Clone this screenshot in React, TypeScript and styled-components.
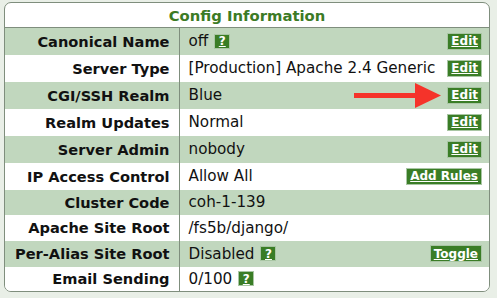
import React from "react";
import styled, { createGlobalStyle } from "styled-components";

const Global = createGlobalStyle`
  html, body { margin: 0; padding: 0; background: #e9efe7; }
  body { font-family: "DejaVu Sans", Verdana, sans-serif; }
`;

const Page = styled.div`
  position: relative;
  padding: 2px 7px 0 4px;
  width: 497px;
  height: 298px;
  box-sizing: border-box;
`;

const Panel = styled.div`
  border: 1px solid #7f8e7d;
  border-radius: 7px;
  overflow: hidden;
  background: #ffffff;
`;

const Table = styled.table`
  width: 100%;
  border-collapse: collapse;
  table-layout: fixed;
`;

const LabelCol = styled.col`
  width: 174px;
`;

const TitleCell = styled.th`
  height: 24px;
  padding: 0;
  font-size: 14.8px;
  font-weight: bold;
  color: #3c7b25;
  text-align: center;
  border-bottom: 1px solid #7f8e7d;
`;

const Row = styled.tr<{ $alt: boolean; $h: number }>`
  height: ${(p) => p.$h}px;
  background: ${(p) => (p.$alt ? "#c1d7be" : "#ffffff")};
  & + & td { border-top: 1px solid #7f8e7d; }
`;

const LabelCell = styled.td`
  padding: 0 9px 0 0;
  text-align: right;
  font-size: 14.6px;
  font-weight: bold;
  color: #111;
  border-right: 1px solid #7f8e7d;
  white-space: nowrap;
`;

const ValueCell = styled.td`
  padding: 0 7px 0 9px;
  font-size: 15.2px;
  color: #111;
  white-space: nowrap;
`;

const ValueInner = styled.div`
  display: flex;
  align-items: center;
`;

const ValueText = styled.span`
  flex: 0 0 auto;
`;

const Spacer = styled.span`
  flex: 1 1 auto;
`;

const GreenButton = styled.span`
  display: inline-flex;
  align-items: center;
  justify-content: center;
  height: 17px;
  padding: 0 3px;
  box-sizing: border-box;
  background: #3a7d26;
  border: 1px solid #a9c6a4;
  color: #ffffff;
  font-size: 12px;
  font-weight: bold;
  text-decoration: underline;
  text-underline-offset: 1px;
`;

const HelpButton = styled(GreenButton)`
  width: 16px;
  height: 15px;
  padding: 0;
  margin-left: 6px;
  font-size: 12px;
`;

const Arrow = styled.svg`
  position: absolute;
  left: 354px;
  top: 83px;
`;

type Item = {
  label: string;
  value: string;
  help?: boolean;
  action?: string;
  h: number;
};

const items: Item[] = [
  { label: "Canonical Name", value: "off", help: true, action: "Edit", h: 27 },
  { label: "Server Type", value: "[Production] Apache 2.4 Generic", action: "Edit", h: 27 },
  { label: "CGI/SSH Realm", value: "Blue", action: "Edit", h: 27 },
  { label: "Realm Updates", value: "Normal", action: "Edit", h: 27 },
  { label: "Server Admin", value: "nobody", action: "Edit", h: 27 },
  { label: "IP Access Control", value: "Allow All", action: "Add Rules", h: 27 },
  { label: "Cluster Code", value: "coh-1-139", h: 25 },
  { label: "Apache Site Root", value: "/fs5b/django/", h: 26 },
  { label: "Per-Alias Site Root", value: "Disabled", help: true, action: "Toggle", h: 26 },
  { label: "Email Sending", value: "0/100", help: true, h: 24 },
];

export default function App() {
  return (
    <Page>
      <Global />
      <Panel>
        <Table>
          <colgroup>
            <LabelCol />
            <col />
          </colgroup>
          <thead>
            <tr>
              <TitleCell colSpan={2}>Config Information</TitleCell>
            </tr>
          </thead>
          <tbody>
            {items.map((it, i) => (
              <Row key={it.label} $alt={i % 2 === 0} $h={it.h}>
                <LabelCell>{it.label}</LabelCell>
                <ValueCell>
                  <ValueInner>
                    <ValueText>{it.value}</ValueText>
                    {it.help && <HelpButton>?</HelpButton>}
                    <Spacer />
                    {it.action && <GreenButton>{it.action}</GreenButton>}
                  </ValueInner>
                </ValueCell>
              </Row>
            ))}
          </tbody>
        </Table>
      </Panel>
      <Arrow width="88" height="25" viewBox="0 0 88 25">
        <rect x="0" y="10" width="62" height="5" fill="#f5332a" />
        <polygon points="61,0 87,12.5 61,25" fill="#f5332a" />
      </Arrow>
    </Page>
  );
}
